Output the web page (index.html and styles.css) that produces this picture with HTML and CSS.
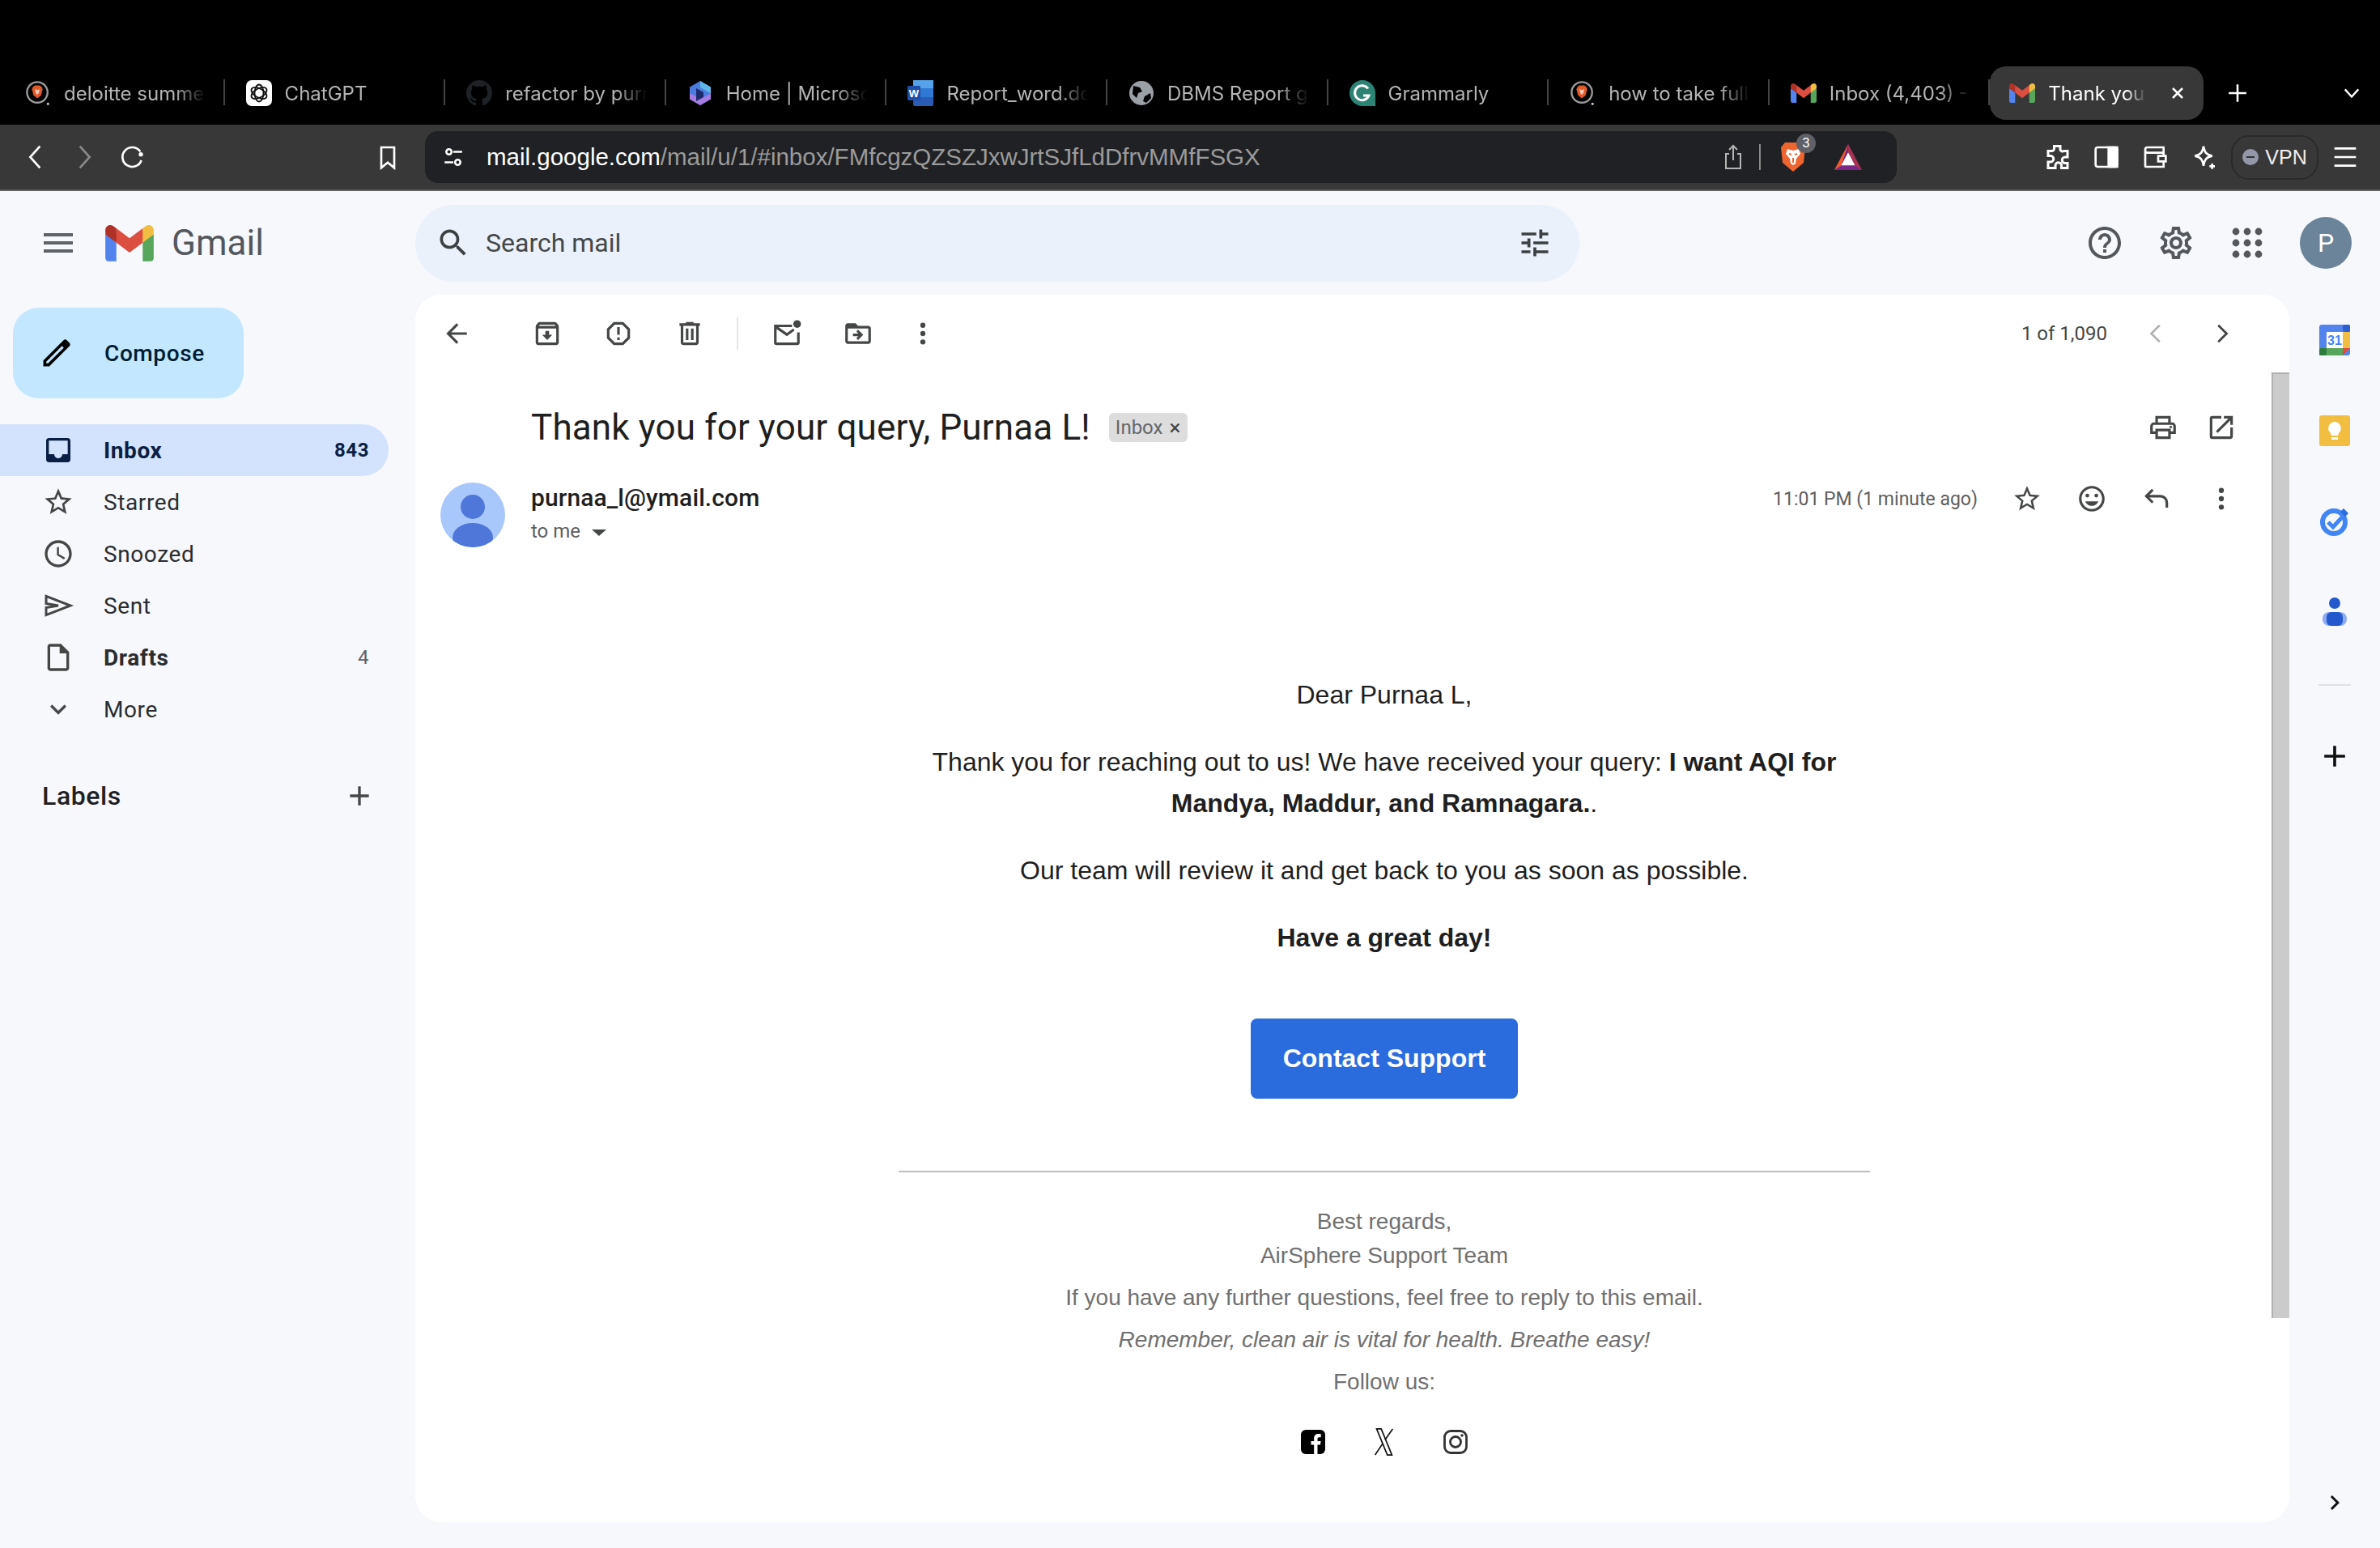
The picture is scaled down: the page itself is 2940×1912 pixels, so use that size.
FILE: index.html
```html
<!DOCTYPE html>
<html lang="en">
<head>
    <meta charset="UTF-8">
    <title>Thank you for your query, Purnaa L! - Gmail</title>
    <link rel="stylesheet" href="styles.css">
</head>
<body>
    <svg class="defs" width="0" height="0">
        <symbol id="brave-tab" viewBox="0 0 32 34">
            <circle cx="15" cy="16" r="13.5" fill="none" stroke="#9a9a9a" stroke-width="2.5"/>
            <path d="M9 9l3-2h6l3 2 1 3-2 8-5 4-5-4-2-8z" fill="#e0592a"/>
            <path d="M12 12l3 1 3-1-1 5-2 2-2-2z" fill="#f7c9b5"/>
            <circle cx="29" cy="31" r="1.6" fill="#ccc"/>
        </symbol>
        <symbol id="gmail-m" viewBox="0 0 256 193">
            <path fill="#5384ee" d="M58.182 192.05V93.14L27.507 65.077 0 49.504v125.091c0 9.658 7.825 17.455 17.455 17.455h40.727Z"/>
            <path fill="#58a55c" d="M197.818 192.05h40.727c9.659 0 17.455-7.826 17.455-17.455V49.505l-31.156 17.837-27.026 25.798v98.91Z"/>
            <path fill="#db4e40" d="m58.182 93.14-4.174-38.647 4.174-36.989L128 69.868l69.818-52.364 4.669 34.992-4.669 40.644L128 145.504z"/>
            <path fill="#f2be42" d="M197.818 17.504V93.14L256 49.504V26.231c0-21.585-24.64-33.89-41.89-20.945l-16.292 12.218Z"/>
            <path fill="#b03126" d="M0 49.504l26.759 20.07L58.182 93.14V17.504L41.89 5.286C24.61-7.66 0 4.646 0 26.23v23.273Z"/>
        </symbol>
        <symbol id="i-more" viewBox="0 0 24 24"><circle cx="12" cy="5.5" r="2"/><circle cx="12" cy="12" r="2"/><circle cx="12" cy="18.5" r="2"/></symbol>
        <symbol id="i-star" viewBox="0 0 24 24"><path d="M22 9.24l-7.19-.62L12 2 9.19 8.63 2 9.24l5.46 4.73L5.82 21 12 17.27 18.18 21l-1.63-7.03L22 9.24zM12 15.4l-3.76 2.27 1-4.28-3.32-2.88 4.38-.38L12 6.1l1.71 4.04 4.38.38-3.32 2.88 1 4.28L12 15.4z"/></symbol>
        <symbol id="i-add" viewBox="0 0 24 24"><path d="M19 13h-6v6h-2v-6H5v-2h6V5h2v6h6v2z"/></symbol>
    </svg>

    <div class="tabstrip">
        <div class="tab">
            <svg class="favicon"><use href="#brave-tab"/></svg>
            <span class="tab-title">deloitte summer internship</span>
        </div>
        <div class="tab">
            <svg class="favicon" viewBox="0 0 32 32">
                <rect width="32" height="32" rx="7" fill="#fff"/>
                <g fill="none" stroke="#111" stroke-width="1.8">
                    <ellipse cx="16" cy="16" rx="5.5" ry="10.5"/>
                    <ellipse cx="16" cy="16" rx="5.5" ry="10.5" transform="rotate(60 16 16)"/>
                    <ellipse cx="16" cy="16" rx="5.5" ry="10.5" transform="rotate(120 16 16)"/>
                </g>
            </svg>
            <span class="tab-title">ChatGPT</span>
        </div>
        <div class="tab">
            <svg class="favicon" viewBox="0 0 16 16"><path fill="#1e2227" d="M8 0C3.58 0 0 3.58 0 8c0 3.54 2.29 6.53 5.47 7.59.4.07.55-.17.55-.38 0-.19-.01-.82-.01-1.49-2.01.37-2.53-.49-2.69-.94-.09-.23-.48-.94-.82-1.13-.28-.15-.68-.52-.01-.53.63-.01 1.08.58 1.23.82.72 1.21 1.87.87 2.33.66.07-.52.28-.87.51-1.07-1.78-.2-3.64-.89-3.64-3.95 0-.87.31-1.59.82-2.15-.08-.2-.36-1.02.08-2.12 0 0 .67-.21 2.2.82.64-.18 1.32-.27 2-.27.68 0 1.36.09 2 .27 1.53-1.04 2.2-.82 2.2-.82.44 1.1.16 1.92.08 2.12.51.56.82 1.27.82 2.15 0 3.07-1.87 3.75-3.65 3.95.29.25.54.73.54 1.48 0 1.07-.01 1.93-.01 2.2 0 .21.15.46.55.38A8.013 8.013 0 0016 8c0-4.42-3.58-8-8-8z"/></svg>
            <span class="tab-title">refactor by purnaa-l</span>
        </div>
        <div class="tab">
            <svg class="favicon" viewBox="0 0 32 32">
                <path d="M16 1l13 7.5v15L16 31 3 23.5v-15z" fill="#4c7be0"/>
                <path d="M16 1l13 7.5v8L16 9z" fill="#5fb7e8"/>
                <path d="M3 16l13 7 13-6.5v7L16 31 3 23.5z" fill="#a77ce0"/>
                <path d="M11 10l9 5v6l-9 5z" fill="#1d2a6b"/>
            </svg>
            <span class="tab-title">Home | Microsoft 365</span>
        </div>
        <div class="tab">
            <svg class="favicon" viewBox="0 0 32 32">
                <rect x="7" width="25" height="32" rx="2" fill="#2b5cb5"/>
                <rect x="7" width="25" height="10" fill="#55a1ea"/>
                <rect x="7" y="10" width="25" height="11" fill="#2f78d4"/>
                <rect y="7" width="16" height="18" rx="1.5" fill="#1f4fa8"/>
                <text x="8" y="21" class="word-w">W</text>
            </svg>
            <span class="tab-title">Report_word.docx</span>
        </div>
        <div class="tab">
            <svg class="favicon" viewBox="0 0 32 32">
                <circle cx="16" cy="16" r="15" fill="#9aa0a6"/>
                <path d="M6 7l8 2 3 5-5 2-2 6-5-5zM20 20l7-4 1 6-6 6-4-2z" fill="#000"/>
            </svg>
            <span class="tab-title">DBMS Report guide</span>
        </div>
        <div class="tab">
            <svg class="favicon" viewBox="0 0 32 32">
                <path d="M16 0a16 16 0 0 1 16 16v16H16a16 16 0 0 1 0-32z" fill="#2c8273"/>
                <path d="M23 10.5a9 9 0 1 0 1 8.5h-7" fill="none" stroke="#fff" stroke-width="3"/>
            </svg>
            <span class="tab-title">Grammarly</span>
        </div>
        <div class="tab">
            <svg class="favicon"><use href="#brave-tab"/></svg>
            <span class="tab-title">how to take full page</span>
        </div>
        <div class="tab">
            <svg class="favicon favicon-m"><use href="#gmail-m"/></svg>
            <span class="tab-title">Inbox (4,403) - purnaa</span>
        </div>
        <div class="tab tab-active">
            <svg class="favicon favicon-m"><use href="#gmail-m"/></svg>
            <span class="tab-title">Thank you for your</span>
            <svg class="tab-close" viewBox="0 0 20 20"><path d="M4 4l12 12M16 4L4 16"/></svg>
        </div>
        <svg class="tab-new" viewBox="0 0 24 24"><path d="M12 2v20M2 12h20"/></svg>
        <svg class="tab-list" viewBox="0 0 24 24"><path d="M3 7l9 10 9-10"/></svg>
    </div>

    <div class="toolbar">
        <button class="tool tool-first"><svg viewBox="0 0 24 24"><path d="M16 2L7 12l9 10"/></svg></button>
        <button class="tool tool-off"><svg viewBox="0 0 24 24"><path d="M8 2l9 10-9 10"/></svg></button>
        <button class="tool"><svg viewBox="0 0 24 24"><path d="M19 7a9 9 0 1 0 1 8"/><circle cx="19.5" cy="9.5" r="1"/></svg></button>
        <button class="tool tool-bookmark"><svg viewBox="0 0 24 24"><path d="M6 3h12v19l-6-5-6 5z"/></svg></button>
        <div class="addressbar">
            <svg class="site-icon" viewBox="0 0 24 24"><circle cx="7" cy="6" r="3"/><path d="M12 6h10M2 18h10"/><circle cx="17" cy="18" r="3"/></svg>
            <span class="url"><span class="url-host">mail.google.com</span>/mail/u/1/#inbox/FMfcgzQZSZJxwJrtSJfLdDfrvMMfFSGX</span>
            <svg class="share-icon" viewBox="0 0 24 32"><path d="M12 20V2M7 7l5-5 5 5M7 12H3v18h18V12h-4"/></svg>
            <span class="addr-sep"></span>
            <div class="shield">
                <svg viewBox="0 0 32 38">
                    <path d="M6 1h20l5 6-2 19-13 11L3 26 1 7z" fill="#ef6530"/>
                    <path d="M9 9l7 2 7-2 2 6-5 6-1 6-3 2-3-2-1-6-5-6z" fill="#fff"/>
                    <path d="M11 15l3 1M21 15l-3 1M16 20v6" stroke="#ef6530" stroke-width="2"/>
                </svg>
                <span class="shield-badge">3</span>
            </div>
            <svg class="bat" viewBox="0 0 36 34">
                <path d="M18 0L0 34h36z" fill="#7a2a86"/>
                <path d="M18 0L0 34l9-6z" fill="#f05a28"/>
                <path d="M18 0v10l9 18 9 6z" fill="#a8324f"/>
                <path d="M18 11L9 28h18z" fill="#fff"/>
            </svg>
        </div>
        <button class="tool tool-ext"><svg viewBox="0 0 24 24"><path d="M9 3h5v3a2 2 0 0 0 3 1h3v5h-2a2.5 2.5 0 0 0 0 5h2v4h-5v-2a2.5 2.5 0 0 0-5 0v2H4v-5h2a2.5 2.5 0 0 0 0-5H4V7h3a2 2 0 0 0 2-2z"/></svg></button>
        <button class="tool"><svg viewBox="0 0 24 24"><rect x="2" y="3" width="20" height="18" rx="2"/><rect x="14" y="3" width="8" height="18" fill="#fff"/></svg></button>
        <button class="tool"><svg viewBox="0 0 24 24"><path d="M20 8V3H5a2 2 0 0 0-2 2v15a1 1 0 0 0 1 1h16v-5M3 6a2 2 0 0 0 2 2h15v3M22 11h-7v5h7z"/></svg></button>
        <button class="tool"><svg viewBox="0 0 24 24"><path d="M12 2c1 6 3 8 8 9-5 1-7 3-8 9-1-6-3-8-8-9 5-1 7-3 8-9zM20 18v5M17.5 20.5h5"/></svg></button>
        <div class="vpn"><span class="vpn-dot"></span>VPN</div>
        <button class="tool tool-menu"><svg viewBox="0 0 24 24"><path d="M2 4h20M2 12h20M2 20h20"/></svg></button>
    </div>
    <div class="toolbar-line"></div>

    <div class="gmail">
        <header class="gm-top">
            <div class="gm-brand">
                <svg class="gm-menu" viewBox="0 0 24 24"><path d="M3 18h18v-2H3v2zm0-5h18v-2H3v2zm0-7v2h18V6H3z"/></svg>
                <svg class="gm-logo"><use href="#gmail-m"/></svg>
                <span class="gm-word">Gmail</span>
            </div>
            <div class="gm-search">
                <svg class="gm-search-ic" viewBox="0 0 24 24"><path d="M15.5 14h-.79l-.28-.27C15.41 12.59 16 11.11 16 9.5 16 5.91 13.09 3 9.5 3S3 5.91 3 9.5 5.91 16 9.5 16c1.61 0 3.09-.59 4.23-1.57l.27.28v.79l5 4.99L20.49 19l-4.99-5zm-6 0C7.01 14 5 11.99 5 9.5S7.01 5 9.5 5 14 7.01 14 9.5 11.99 14 9.5 14z"/></svg>
                <span class="gm-search-text">Search mail</span>
                <svg class="gm-search-ic" viewBox="0 0 24 24"><path d="M3 17v2h6v-2H3zM3 5v2h10V5H3zm10 16v-2h8v-2h-8v-2h-2v6h2zM7 9v2H3v2h4v2h2V9H7zm14 4v-2H11v2h10zm-6-4h2V7h4V5h-4V3h-2v6z"/></svg>
            </div>
            <div class="gm-actions">
                <svg class="gm-act" viewBox="0 0 24 24"><path d="M11 18h2v-2h-2v2zm1-16C6.48 2 2 6.48 2 12s4.48 10 10 10 10-4.48 10-10S17.52 2 12 2zm0 18c-4.41 0-8-3.59-8-8s3.59-8 8-8 8 3.59 8 8-3.59 8-8 8zm0-14c-2.21 0-4 1.79-4 4h2c0-1.1.9-2 2-2s2 .9 2 2c0 2-3 1.75-3 5h2c0-2.25 3-2.5 3-5 0-2.21-1.79-4-4-4z"/></svg>
                <svg class="gm-act" viewBox="0 0 24 24"><path d="M19.43 12.98c.04-.32.07-.64.07-.98 0-.34-.03-.66-.07-.98l2.11-1.65c.19-.15.24-.42.12-.64l-2-3.46c-.09-.16-.26-.25-.44-.25-.06 0-.12.01-.17.03l-2.49 1c-.52-.4-1.08-.73-1.69-.98l-.38-2.65C14.46 2.18 14.25 2 14 2h-4c-.25 0-.46.18-.49.42l-.38 2.65c-.61.25-1.17.59-1.69.98l-2.49-1c-.06-.02-.12-.03-.18-.03-.17 0-.34.09-.43.25l-2 3.46c-.13.22-.07.49.12.64l2.11 1.65c-.04.32-.07.65-.07.98 0 .33.03.66.07.98l-2.11 1.65c-.19.15-.24.42-.12.64l2 3.46c.09.16.26.25.44.25.06 0 .12-.01.17-.03l2.49-1c.52.4 1.08.73 1.69.98l.38 2.65c.03.24.24.42.49.42h4c.25 0 .46-.18.49-.42l.38-2.65c.61-.25 1.17-.59 1.69-.98l2.49 1c.06.02.12.03.18.03.17 0 .34-.09.43-.25l2-3.46c.12-.22.07-.49-.12-.64l-2.11-1.65zm-1.98-1.71c.04.31.05.52.05.73 0 .21-.02.43-.05.73l-.14 1.13.89.7 1.08.84-.7 1.21-1.27-.51-1.04-.42-.9.68c-.43.32-.84.56-1.25.73l-1.06.43-.16 1.13-.2 1.35h-1.4l-.19-1.35-.16-1.13-1.06-.43c-.43-.18-.83-.41-1.23-.71l-.91-.7-1.06.43-1.27.51-.7-1.21 1.08-.84.89-.7-.14-1.13c-.03-.31-.05-.54-.05-.74s.02-.43.05-.73l.14-1.13-.89-.7-1.08-.84.7-1.21 1.27.51 1.04.42.9-.68c.43-.32.84-.56 1.25-.73l1.06-.43.16-1.13.2-1.35h1.39l.19 1.35.16 1.13 1.06.43c.43.18.83.41 1.23.71l.91.7 1.06-.43 1.27-.51.7 1.21-1.07.85-.89.7.14 1.13zM12 8c-2.21 0-4 1.79-4 4s1.79 4 4 4 4-1.79 4-4-1.79-4-4-4zm0 6c-1.1 0-2-.9-2-2s.9-2 2-2 2 .9 2 2-.9 2-2 2z"/></svg>
                <svg class="gm-act" viewBox="0 0 24 24"><circle cx="5" cy="5" r="2.2"/><circle cx="12" cy="5" r="2.2"/><circle cx="19" cy="5" r="2.2"/><circle cx="5" cy="12" r="2.2"/><circle cx="12" cy="12" r="2.2"/><circle cx="19" cy="12" r="2.2"/><circle cx="5" cy="19" r="2.2"/><circle cx="12" cy="19" r="2.2"/><circle cx="19" cy="19" r="2.2"/></svg>
                <div class="gm-avatar">P</div>
            </div>
        </header>

        <div class="gm-body">
            <aside class="sidebar">
                <button class="compose">
                    <svg viewBox="0 0 24 24"><path d="M3 21v-4L16.5 3.5a1.8 1.8 0 0 1 2.5 0l1.500 1.500a1.8 1.8 0 0 1 0 2.5L7 21zm2-2h1.2L16.8 8.400l-1.2-1.2L5 17.8z"/></svg>
                    <span>Compose</span>
                </button>
                <nav class="nav">
                    <a class="nav-row nav-current">
                        <svg viewBox="0 0 24 24"><path d="M19 3H5c-1.1 0-2 .9-2 2v14c0 1.1.9 2 2 2h14c1.1 0 2-.9 2-2V5c0-1.1-.9-2-2-2zm0 12h-4c0 1.66-1.34 3-3 3s-3-1.34-3-3H5V5h14v10z"/></svg>
                        <span class="nav-label">Inbox</span><span class="nav-count">843</span>
                    </a>
                    <a class="nav-row">
                        <svg><use href="#i-star"/></svg>
                        <span class="nav-label">Starred</span>
                    </a>
                    <a class="nav-row">
                        <svg viewBox="0 0 24 24"><path d="M11.99 2C6.47 2 2 6.48 2 12s4.47 10 9.99 10C17.52 22 22 17.52 22 12S17.52 2 11.99 2zM12 20c-4.42 0-8-3.58-8-8s3.58-8 8-8 8 3.58 8 8-3.58 8-8 8zm.5-13H11v6l5.25 3.15.75-1.23-4.5-2.67z"/></svg>
                        <span class="nav-label">Snoozed</span>
                    </a>
                    <a class="nav-row">
                        <svg class="sent-ic" viewBox="0 0 24 24"><path d="M3 5l18 7-18 7v-5.500l9-1.500-9-1.500z"/></svg>
                        <span class="nav-label">Sent</span>
                    </a>
                    <a class="nav-row nav-bold">
                        <svg viewBox="0 0 24 24"><path d="M14 2H6c-1.1 0-2 .9-2 2v16c0 1.1.9 2 2 2h12c1.1 0 2-.9 2-2V8l-6-6zm4 18H6V4h7v5h5v11z"/></svg>
                        <span class="nav-label">Drafts</span><span class="nav-count nav-count-light">4</span>
                    </a>
                    <a class="nav-row">
                        <svg viewBox="0 0 24 24"><path d="M16.59 8.59L12 13.17 7.41 8.59 6 10l6 6 6-6z"/></svg>
                        <span class="nav-label">More</span>
                    </a>
                </nav>
                <div class="labels">
                    <span>Labels</span>
                    <svg><use href="#i-add"/></svg>
                </div>
            </aside>

            <main class="card">
                <div class="scrollbar"></div>
                <div class="mail-tools">
                    <button class="mt mt-back"><svg viewBox="0 0 24 24"><path d="M20 11H7.83l5.59-5.59L12 4l-8 8 8 8 1.41-1.41L7.83 13H20v-2z"/></svg></button>
                    <button class="mt mt-gap"><svg viewBox="0 0 24 24"><path d="M20.54 5.23l-1.39-1.68C18.88 3.21 18.47 3 18 3H6c-.47 0-.88.21-1.16.55L3.46 5.23C3.17 5.57 3 6.02 3 6.5V19c0 1.1.9 2 2 2h14c1.1 0 2-.9 2-2V6.5c0-.48-.17-.93-.46-1.27zM6.24 5h11.52l.83 1H5.42l.82-1zM5 19V8h14v11H5zm8.45-9h-2.9v3H8l4 4 4-4h-2.55z"/></svg></button>
                    <button class="mt"><svg viewBox="0 0 24 24"><path d="M15.73 3H8.27L3 8.27v7.46L8.27 21h7.46L21 15.73V8.27L15.73 3zM19 14.9L14.9 19H9.1L5 14.9V9.1L9.1 5h5.8L19 9.1v5.8zM11 7h2v6h-2zM11 15h2v2h-2z"/></svg></button>
                    <button class="mt"><svg viewBox="0 0 24 24"><path d="M15 4V3H9v1H4v2h1v13c0 1.1.9 2 2 2h10c1.1 0 2-.9 2-2V6h1V4h-5zm2 15H7V6h10v13zM9 8h2v9H9zm4 0h2v9h-2z"/></svg></button>
                    <span class="mt-divider"></span>
                    <button class="mt mt-after"><svg viewBox="0 0 24 24"><path d="M2 5h14v2H5.5l6.5 4.5L17 8l1 1.7L12 14 4 8.5V19h16v-8h2v8a2 2 0 0 1-2 2H4a2 2 0 0 1-2-2z"/><circle cx="20" cy="4.5" r="3"/></svg></button>
                    <button class="mt"><svg viewBox="0 0 24 24"><path d="M20 6h-8l-2-2H4c-1.1 0-1.99.9-1.99 2L2 18c0 1.1.9 2 2 2h16c1.1 0 2-.9 2-2V8c0-1.1-.9-2-2-2zm0 12H4V8h16v10zm-8-1l4-4-4-4-1.4 1.4 1.6 1.6H8v2h4.2l-1.6 1.6L12 17z"/></svg></button>
                    <button class="mt mt-narrow"><svg><use href="#i-more"/></svg></button>
                    <span class="mt-count">1 of 1,090</span>
                    <button class="mt mt-pager mt-disabled"><svg viewBox="0 0 24 24"><path d="M15.41 5.41L14 4l-8 8 8 8 1.41-1.41L8.83 12z"/></svg></button>
                    <button class="mt mt-pager"><svg viewBox="0 0 24 24"><path d="M8.59 5.41L10 4l8 8-8 8-1.41-1.41L15.17 12z"/></svg></button>
                </div>

                <div class="subject-row">
                    <h1 class="subject">Thank you for your query, Purnaa L!</h1>
                    <span class="chip">Inbox<span class="chip-x">×</span></span>
                    <button class="mt mt-narrow mt-push"><svg viewBox="0 0 24 24"><path d="M19 8h-1V3H6v5H5c-1.66 0-3 1.34-3 3v6h4v4h12v-4h4v-6c0-1.66-1.34-3-3-3zM8 5h8v3H8V5zm8 14H8v-4h8v4zm4-4h-2v-2H6v2H4v-4c0-.55.45-1 1-1h14c.55 0 1 .45 1 1v4z"/><circle cx="18" cy="11.5" r="1"/></svg></button>
                    <button class="mt mt-narrow"><svg viewBox="0 0 24 24"><path d="M19 19H5V5h7V3H5a2 2 0 0 0-2 2v14a2 2 0 0 0 2 2h14c1.1 0 2-.9 2-2v-7h-2v7zM14 3v2h3.59l-9.83 9.83 1.41 1.41L19 6.41V10h2V3h-7z"/></svg></button>
                </div>

                <div class="sender-row">
                    <svg class="sender-pic" viewBox="0 0 80 80">
                        <clipPath id="pic-clip"><circle cx="40" cy="40" r="40"/></clipPath>
                        <circle cx="40" cy="40" r="40" fill="#a8c7fa"/>
                        <g clip-path="url(#pic-clip)" fill="#4f77d9">
                            <ellipse cx="40" cy="30" rx="15" ry="15"/>
                            <ellipse cx="40" cy="68" rx="25" ry="18"/>
                        </g>
                    </svg>
                    <div class="sender-info">
                        <div class="sender-name">purnaa_l@ymail.com</div>
                        <div class="sender-to">to me <span class="caret"></span></div>
                    </div>
                    <div class="sender-right">
                        <span class="sender-time">11:01 PM (1 minute ago)</span>
                        <button class="mt mt-msg"><svg><use href="#i-star"/></svg></button>
                        <button class="mt mt-msg"><svg viewBox="0 0 24 24"><path d="M11.99 2C6.47 2 2 6.48 2 12s4.47 10 9.99 10C17.52 22 22 17.52 22 12S17.52 2 11.99 2zM12 20c-4.42 0-8-3.58-8-8s3.58-8 8-8 8 3.58 8 8-3.58 8-8 8zm3.5-9a1.5 1.5 0 1 0 0-3 1.5 1.5 0 0 0 0 3zm-7 0a1.5 1.5 0 1 0 0-3 1.5 1.5 0 0 0 0 3zm3.5 6.5c2.33 0 4.31-1.46 5.11-3.5H6.89c.8 2.04 2.78 3.5 5.11 3.5z"/></svg></button>
                        <button class="mt mt-msg"><svg viewBox="0 0 24 24"><path class="reply" d="M9 5l-5 5 5 5M4 10h11a5 5 0 0 1 5 5v4"/></svg></button>
                        <button class="mt mt-msg"><svg><use href="#i-more"/></svg></button>
                    </div>
                </div>

                <div class="email">
                    <div class="email-inner">
                        <p>Dear Purnaa L,</p>
                        <p>Thank you for reaching out to us! We have received your query: <strong>I want AQI for Mandya, Maddur, and Ramnagara.</strong>.</p>
                        <p>Our team will review it and get back to you as soon as possible.</p>
                        <p><strong>Have a great day!</strong></p>
                        <a class="support-btn">Contact Support</a>
                        <hr class="email-rule">
                        <p class="foot foot-tight">Best regards,<br>AirSphere Support Team</p>
                        <p class="foot">If you have any further questions, feel free to reply to this email.</p>
                        <p class="foot"><em>Remember, clean air is vital for health. Breathe easy!</em></p>
                        <p class="foot">Follow us:</p>
                        <div class="social">
                            <svg viewBox="0 0 30 30"><rect width="30" height="30" rx="6" fill="#000"/><path d="M20.5 30V18.5h3.5l.6-4.5h-4.1v-2.7c0-1.3.5-2.1 2.2-2.1h2V5.3c-.5-.1-1.8-.2-3-.2-3.3 0-5.500 2-5.500 5.600V14h-3.700v4.500h3.700V30z" fill="#fff"/></svg>
                            <svg viewBox="0 0 30 36"><path d="M5 1h6l14 34h-6z" fill="none" stroke="#111" stroke-width="1.8"/><path d="M26 1L16 15M13 20L3 35" fill="none" stroke="#111" stroke-width="1.8"/></svg>
                            <svg viewBox="0 0 30 30"><rect x="1.5" y="1.5" width="27" height="27" rx="7.5" fill="none" stroke="#333" stroke-width="2.8"/><circle cx="15" cy="15" r="6.5" fill="none" stroke="#333" stroke-width="2.8"/><circle cx="23" cy="7" r="1.8" fill="#333"/></svg>
                        </div>
                    </div>
                </div>
            </main>

            <aside class="rail">
                <svg class="rail-ic" viewBox="0 0 38 38">
                    <rect width="38" height="38" rx="3" fill="#5384ee"/>
                    <rect x="29" y="0" width="9" height="9" rx="2" fill="#2c5fd0"/>
                    <rect x="29" y="9" width="9" height="20" fill="#f2be42"/>
                    <rect y="29" width="29" height="9" fill="#58a55c"/>
                    <rect y="29" width="9" height="9" rx="2" fill="#2e7d3c"/>
                    <path d="M29 29h9l-9 9z" fill="#db4e40"/>
                    <rect x="9" y="9" width="20" height="20" fill="#fff"/>
                    <text x="19" y="25" class="cal-num">31</text>
                </svg>
                <svg class="rail-ic" viewBox="0 0 38 38">
                    <rect width="38" height="38" rx="3" fill="#f2be42"/>
                    <path d="M19 8a8 8 0 0 0-5 14l1 3h8l1-3a8 8 0 0 0-5-14z" fill="#fff"/>
                    <rect x="15" y="27" width="8" height="3" fill="#fff"/>
                </svg>
                <svg class="rail-ic" viewBox="0 0 38 38">
                    <circle cx="18" cy="20" r="14" fill="none" stroke="#4285f4" stroke-width="6"/>
                    <path d="M11 20l6 6 11-12" fill="none" stroke="#4285f4" stroke-width="5"/>
                    <path d="M30 3l6 6-4 4-6-6z" fill="#2c6be0"/>
                </svg>
                <svg class="rail-ic" viewBox="0 0 38 38">
                    <circle cx="19" cy="8" r="7" fill="#2359cc"/>
                    <rect x="4" y="19" width="30" height="17" rx="8" fill="#8eaaf3"/>
                    <rect x="9" y="19" width="20" height="17" rx="6" fill="#2359cc"/>
                </svg>
                <span class="rail-line"></span>
                <svg class="rail-plus"><use href="#i-add"/></svg>
                <svg class="rail-chevron" viewBox="0 0 24 24"><path d="M8.59 16.59L13.17 12 8.59 7.41 10 6l6 6-6 6z"/></svg>
            </aside>
        </div>
    </div>
</body>
</html>
```

FILE: styles.css
```css
* {
    box-sizing: border-box;
}
html, body {
    margin: 0;
    padding: 0;
}
body {
    width: 2940px;
    height: 1912px;
    overflow: hidden;
    background: #f6f8fc;
    font-family: Roboto, "Liberation Sans", sans-serif;
}
button {
    background: none;
    border: none;
    padding: 0;
    display: flex;
    align-items: center;
    justify-content: center;
}
.defs {
    position: absolute;
}

/* browser tabs */
.tabstrip {
    height: 154px;
    background: #000;
    padding: 82px 0 0 5px;
    display: flex;
    align-items: flex-start;
    font-family: Inter, "Liberation Sans", sans-serif;
}
.tab {
    width: 272.6px;
    height: 66px;
    flex: none;
    display: flex;
    align-items: center;
    padding: 0 24px 0 26px;
    gap: 16px;
    position: relative;
    color: #b5b5b5;
    font-size: 24px;
}
.tab::after {
    content: "";
    position: absolute;
    right: 0;
    top: 16px;
    width: 2px;
    height: 32px;
    background: #444;
}
.favicon {
    width: 32px;
    height: 32px;
    flex: none;
}
.favicon-m {
    height: 26px;
}
.tab-title {
    flex: 1;
    min-width: 0;
    white-space: nowrap;
    overflow: hidden;
    -webkit-mask-image: linear-gradient(to right, #000 78%, transparent);
    mask-image: linear-gradient(to right, #000 78%, transparent);
}
.tab-active {
    width: 264px;
    background: #383838;
    border-radius: 20px;
    color: #fff;
    padding: 0 22px 0 24px;
}
.tab-active::after {
    display: none;
}
.tab-active .tab-title {
    margin-right: 12px;
}
.tab-close {
    width: 20px;
    height: 20px;
    flex: none;
    fill: none;
    stroke: #fff;
    stroke-width: 2.5;
}
.tab-new {
    width: 26px;
    height: 26px;
    margin: 20px 0 0 29px;
    fill: none;
    stroke: #fff;
    stroke-width: 2.4;
}
.tab-list {
    width: 22px;
    height: 22px;
    margin: 22px 0 0 117px;
    fill: none;
    stroke: #fff;
    stroke-width: 2.6;
}

/* browser toolbar */
.toolbar {
    height: 80px;
    background: #383838;
    display: flex;
    align-items: center;
}
.toolbar-line {
    height: 2px;
    background: #606060;
}
.tool {
    width: 60px;
    height: 60px;
    flex: none;
}
.tool svg {
    width: 32px;
    height: 32px;
    fill: none;
    stroke: #fff;
    stroke-width: 2;
}
.tool-first {
    margin-left: 14px;
}
.tool-off svg {
    stroke: #8a8a8a;
}
.tool-bookmark {
    margin-left: 255px;
    margin-right: 16px;
}
.tool-ext {
    margin-left: 169px;
}
.tool-ext svg {
    width: 36px;
    height: 36px;
}
.tool-menu {
    margin-left: 3px;
}
.addressbar {
    width: 1818px;
    height: 64px;
    flex: none;
    background: #202124;
    border-radius: 16px;
    display: flex;
    align-items: center;
    padding: 0 42px 0 22px;
    color: #9b9b9b;
    font: 29.5px "Liberation Sans", sans-serif;
}
.site-icon {
    width: 26px;
    height: 28px;
    fill: none;
    stroke: #fff;
    stroke-width: 2.4;
    margin-right: 28px;
    flex: none;
}
.url {
    flex: 1;
    white-space: nowrap;
}
.url-host {
    color: #fff;
}
.share-icon {
    width: 24px;
    height: 32px;
    fill: none;
    stroke: #b5b5b5;
    stroke-width: 2;
}
.addr-sep {
    width: 2px;
    height: 32px;
    background: #8a8a8a;
    margin: 0 24px 0 20px;
}
.shield {
    position: relative;
    width: 32px;
    height: 38px;
    margin-right: 34px;
}
.shield svg {
    width: 32px;
    height: 38px;
    display: block;
}
.shield-badge {
    position: absolute;
    top: -10px;
    right: -12px;
    width: 24px;
    height: 24px;
    border-radius: 50%;
    background: #5f6068;
    color: #fff;
    font-size: 16px;
    text-align: center;
    line-height: 24px;
}
.bat {
    width: 36px;
    height: 32px;
}
.vpn {
    width: 108px;
    height: 55px;
    margin-left: 4px;
    border: 2px solid #2a2a2a;
    border-radius: 22px;
    color: #eee;
    font: 25px "Liberation Sans", sans-serif;
    display: flex;
    align-items: center;
    justify-content: center;
    gap: 8px;
    flex: none;
}
.vpn-dot {
    width: 20px;
    height: 20px;
    border-radius: 50%;
    background: #9497a8;
    position: relative;
}
.vpn-dot::after {
    content: "";
    position: absolute;
    left: 5px;
    right: 5px;
    top: 9px;
    height: 2px;
    background: #333;
}

/* gmail header */
.gm-top {
    height: 128px;
    display: flex;
    align-items: center;
}
.gm-brand {
    width: 513px;
    flex: none;
    display: flex;
    align-items: center;
    padding-left: 48px;
}
.gm-menu {
    width: 48px;
    height: 48px;
    fill: #5f6368;
}
.gm-logo {
    width: 60px;
    height: 45px;
    margin-left: 34px;
}
.gm-word {
    margin-left: 22px;
    font-size: 44px;
    color: #54575c;
}
.gm-search {
    width: 1438px;
    height: 95px;
    flex: none;
    background: #eaf1fb;
    border-radius: 48px;
    display: flex;
    align-items: center;
    padding: 0 33px 0 25px;
}
.gm-search-ic {
    width: 44px;
    height: 44px;
    fill: #3c4043;
    flex: none;
}
.gm-search-text {
    flex: 1;
    font-size: 32px;
    color: #444746;
    margin-left: 18px;
}
.gm-actions {
    flex: 1;
    display: flex;
    align-items: center;
    padding-left: 625px;
}
.gm-act {
    width: 48px;
    height: 48px;
    fill: #54575c;
    margin-right: 40px;
    flex: none;
}
.gm-avatar {
    width: 64px;
    height: 64px;
    flex: none;
    margin-left: 1px;
    border-radius: 50%;
    background: #6b8499;
    color: #fff;
    font-size: 32px;
    display: flex;
    align-items: center;
    justify-content: center;
}

/* gmail layout */
.gm-body {
    display: flex;
    height: 1516px;
}
.sidebar {
    width: 513px;
    flex: none;
    padding-top: 16px;
    color: #202124;
    font-size: 28px;
}
.compose {
    width: 285px;
    height: 112px;
    margin-left: 16px;
    background: #c2e7ff;
    border-radius: 32px;
    justify-content: flex-start;
    padding-left: 32px;
    gap: 37px;
    color: #001d35;
    font: 500 28px Roboto, sans-serif;
    letter-spacing: 0.6px;
}
.compose svg {
    width: 44px;
    height: 44px;
    fill: #000;
}
.nav {
    margin-top: 32px;
}
.nav-row {
    width: 480px;
    height: 64px;
    display: flex;
    align-items: center;
    padding: 0 24px 0 48px;
    gap: 32px;
    border-radius: 0 32px 32px 0;
    color: #2b2d30;
    letter-spacing: 0.6px;
}
.nav-row svg {
    width: 48px;
    height: 40px;
    fill: #444746;
    flex: none;
}
.nav-row .sent-ic {
    fill: none;
    stroke: #444746;
    stroke-width: 1.8;
}
.nav-label {
    flex: 1;
}
.nav-current {
    background: #d3e3fd;
    color: #0b1f45;
    font-weight: 700;
}
.nav-current svg {
    fill: #0b1f45;
}
.nav-bold {
    font-weight: 700;
}
.nav-count {
    font-size: 24px;
}
.nav-count-light {
    font-weight: 400;
    color: #5f6368;
}
.labels {
    width: 480px;
    display: flex;
    align-items: center;
    justify-content: space-between;
    padding: 0 16px 0 52px;
    margin-top: 47px;
    height: 56px;
    font-size: 32px;
    font-weight: 500;
    letter-spacing: 0.6px;
}
.labels svg {
    width: 40px;
    height: 40px;
    fill: #444746;
}

/* message card */
.card {
    width: 2315px;
    height: 1516px;
    flex: none;
    background: #fff;
    border-radius: 32px;
    position: relative;
    overflow: hidden;
}
.scrollbar {
    position: absolute;
    right: 0;
    top: 96px;
    width: 22px;
    height: 1168px;
    background: #cbcbcb;
    border-left: 2px solid #b0b0b0;
    border-top: 2px solid #b0b0b0;
}
.mail-tools {
    height: 96px;
    display: flex;
    align-items: center;
    padding: 0 44px 0 7px;
}
.mt {
    width: 88px;
    height: 60px;
    flex: none;
}
.mt svg {
    width: 38px;
    height: 38px;
    fill: #444746;
}
.mt-gap {
    margin-left: 24px;
}
.mt-divider {
    width: 2px;
    height: 40px;
    background: #e6e6e6;
    margin: 0 16px 0 14px;
    flex: none;
}
.mt-narrow {
    width: 72px;
}
.mt-count {
    margin-left: auto;
    margin-right: 21px;
    font-size: 24px;
    color: #444746;
}
.mt-pager {
    width: 80px;
}
.mt-pager svg {
    width: 34px;
    height: 34px;
}
.mt-disabled svg {
    fill: #b5b5b5;
}
.subject-row {
    height: 136px;
    display: flex;
    align-items: center;
    padding: 0 48px 0 143px;
}
.subject {
    margin: 0;
    font-size: 44px;
    font-weight: 400;
    letter-spacing: 0.15px;
    color: #1f1f1f;
}
.chip {
    margin-left: 23px;
    height: 36px;
    padding: 0 9px 0 8px;
    background: #ddd;
    border-radius: 6px;
    font-size: 24px;
    line-height: 36px;
    color: #666;
    display: flex;
}
.chip-x {
    margin-left: 8px;
    color: #444;
    font-size: 26px;
}
.mt-push {
    margin-left: auto;
}
.sender-row {
    height: 80px;
    display: flex;
    align-items: flex-start;
    padding: 0 44px 0 31px;
}
.sender-pic {
    width: 80px;
    height: 80px;
    flex: none;
}
.sender-info {
    margin-left: 32px;
    margin-top: -2px;
}
.sender-name {
    font-size: 30px;
    line-height: 42px;
    font-weight: 500;
    letter-spacing: 0.1px;
    color: #1f1f1f;
}
.sender-to {
    margin-top: 4px;
    font-size: 24px;
    line-height: 32px;
    color: #5e5e5e;
}
.caret {
    display: inline-block;
    width: 0;
    height: 0;
    margin-left: 8px;
    vertical-align: 2px;
    border-left: 9px solid transparent;
    border-right: 9px solid transparent;
    border-top: 8px solid #444746;
}
.sender-right {
    margin-left: auto;
    height: 40px;
    display: flex;
    align-items: center;
}
.sender-time {
    font-size: 23px;
    color: #5e5e5e;
    margin-right: 21px;
}
.mt-msg {
    width: 80px;
    height: 40px;
}
.reply {
    fill: none;
    stroke: #444746;
    stroke-width: 2;
}

/* email content */
.email {
    padding: 157px 65px 0 144px;
    display: flex;
    justify-content: center;
    font-family: "Liberation Sans", Arial, sans-serif;
    color: #1f1f1f;
}
.email-inner {
    width: 1200px;
    text-align: center;
    font-size: 32px;
    line-height: 51px;
}
.email-inner p {
    margin: 0 0 32px;
}
.support-btn {
    display: block;
    width: 330px;
    height: 99px;
    margin: 74px auto 0;
    background: #2a6bdd;
    border-radius: 8px;
    color: #fff;
    font-weight: 700;
    line-height: 99px;
}
.email-rule {
    margin: 89px 0 40px;
    border: none;
    border-top: 2px solid #bdbdbd;
}
.email-inner .foot {
    font-size: 28px;
    line-height: 42px;
    color: #707070;
    margin: 0 0 10px;
}
.social {
    margin-top: 36px;
    display: flex;
    justify-content: center;
    gap: 58px;
}
.social svg {
    width: 30px;
    height: 34px;
}

/* right rail */
.rail {
    flex: 1;
    padding-top: 37px;
    display: flex;
    flex-direction: column;
    align-items: center;
    position: relative;
}
.rail-ic {
    width: 38px;
    height: 38px;
    margin-bottom: 74px;
    flex: none;
}
.rail-line {
    width: 40px;
    height: 2px;
    background: #dfe1e5;
    margin-top: -4px;
}
.rail-plus {
    width: 44px;
    height: 44px;
    margin-top: 65px;
    fill: #111;
}
.rail-chevron {
    width: 36px;
    height: 36px;
    margin-top: auto;
    margin-bottom: 6px;
    fill: #111;
}
.cal-num {
    font: 700 16px "Liberation Sans", sans-serif;
    fill: #4285f4;
    text-anchor: middle;
}
.word-w {
    font: 700 13px "Liberation Sans", sans-serif;
    fill: #fff;
    text-anchor: middle;
}
```
